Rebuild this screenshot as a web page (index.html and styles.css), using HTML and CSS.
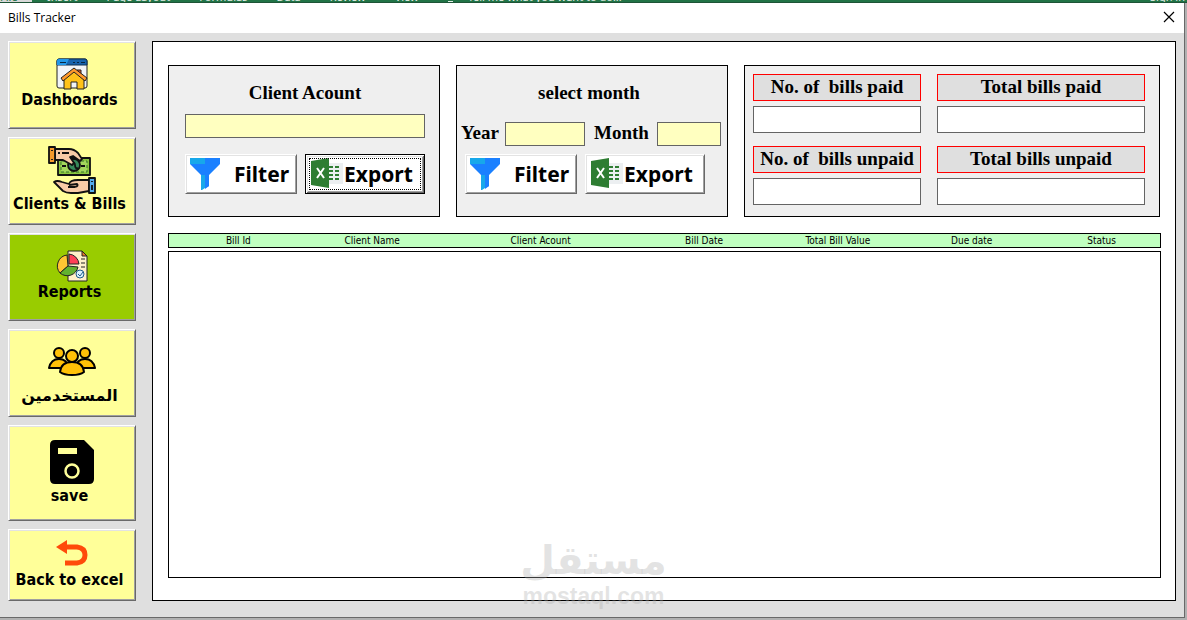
FILE: index.html
```
<!DOCTYPE html>
<html lang="en">
<head>
  <meta charset="UTF-8">
  <title>Bills Tracker</title>
  <link rel="stylesheet" href="styles.css">
</head>
<body>

  <!-- shared icons -->
  <svg class="defs" aria-hidden="true">
    <symbol id="funnel" viewBox="0 0 32 32">
      <path fill="#1a80ff" d="M15 0h15v6L19 17v11l-4 2z"/>
      <path fill="#17a8ea" d="M0 0h15v6H0z"/>
      <path fill="#1a80ff" d="M0 6h15v11h-4z"/>
      <path fill="#17a8ea" d="M11 17h4v13l-3 2h-1z"/>
      <path fill="#1a80ff" d="M15 17h4v11l-4 3z"/>
    </symbol>
    <symbol id="excel" viewBox="0 0 32 32">
      <path fill="#eceff1" d="M16 5h16v21H16z"/>
      <path fill="none" stroke="#2e7d32" stroke-width="2" stroke-dasharray="4 2" d="M18 9h10M18 13h10M18 17h10M18 21h10"/>
      <path fill="#2e7d32" d="M0 3l18-3v30L0 27z"/>
      <path fill="none" stroke="#fff" stroke-width="2" d="M6 10l7 10M13 10L6 20"/>
    </symbol>
  </svg>

  <div class="ribbon">
    <span class="tab file">File</span>
    <span class="tab">Insert</span>
    <span class="tab">Page Layout</span>
    <span class="tab">Formulas</span>
    <span class="tab">Data</span>
    <span class="tab">Review</span>
    <span class="tab">View</span>
    <span class="bulb"></span>
    <span class="tab">Tell me what you want to do...</span>
    <span class="tab signin">Sign in</span>
  </div>

  <div class="window">
    <header class="titlebar">
      <span>Bills Tracker</span>
      <button class="close" aria-label="Close">
        <svg width="12" height="12" viewBox="0 0 12 12"><path d="M1 1l10 10M11 1L1 11" stroke="#000" stroke-width="1.2"/></svg>
      </button>
    </header>

    <div class="content">
      <nav class="sidebar">
        <button class="nav-btn">
          <svg width="32" height="32" viewBox="0 0 32 32">
            <rect x="1" y="1" width="30" height="29" rx="2" fill="#f1f4f8" stroke="#222" />
            <path d="M1 7V3q0-2 2-2h26q2 0 2 2v4z" fill="#1763ad" stroke="#0c3155"/>
            <path d="M1 7V3q0-2 2-2h10l-3 6z" fill="#2196e8"/>
            <path d="M4 4.500h6M17 4.500h2m2 0h2m2 0h4" stroke="#07253f"/>
            <path d="M21 12h4v8h-4z" fill="#e85426" stroke="#222"/>
            <path d="M8 21l10-9 10 9v10h-7v-7h-6v7H8z" fill="#ffc21a" stroke="#222"/>
            <path d="M5 20l13-10 13 10-2 3-11-9-11 9z" fill="#ff982b" stroke="#222" stroke-linejoin="round"/>
          </svg>
          <span>Dashboards</span>
        </button>
        <button class="nav-btn">
          <svg width="48" height="48" viewBox="0 0 48 48" stroke="#111" stroke-width="1.800" stroke-linejoin="round">
            <path d="M10 12h32v17H10z" fill="#8bc63f"/>
            <path d="M13 15h26v11H13z" fill="#a3d65c" stroke="#36752d" stroke-dasharray="3 2" stroke-width="1"/>
            <circle cx="26" cy="19" r="6" fill="#36895a"/>
            <path d="M23 18q4-3 4 1t3 3M14 20h4m15 0h4" fill="none"/>
            <path d="M7 3h14q5 0 9 4l4 6-2 2-7-5-3 1 4 6-2 2-9-5H7z" fill="#f8cba7"/>
            <path d="M10 7h2m2 0h7" fill="none"/>
            <path d="M1 1h6v16H1z" fill="#f69a2c"/>
            <path d="M4 4v1m0 8v1" fill="none"/>
            <path d="M41 34H30q-8 0-9 4l-7-2q-5-2-8 0l9 9q3 2 8 2h7l11-2z" fill="#f8cba7"/>
            <path d="M20 41h7q4-1 2-3l-8 1" fill="none"/>
            <path d="M41 32h6v15h-6z" fill="#55abee"/>
            <path d="M44 35v1m0 3v5" fill="none"/>
          </svg>
          <span>Clients &amp; Bills</span>
        </button>
        <button class="nav-btn active">
          <svg width="32" height="32" viewBox="0 0 32 32" stroke="#222" stroke-linejoin="round">
            <path d="M12 1h14l5 5v25H12z" fill="#fff0c9"/>
            <path d="M26 1v5h5z" fill="#e8792b"/>
            <path d="M25 9h4m-4 4h4m-4 4h4"/>
            <path d="M11 5A11 11 0 0 0 4 23l8-7z" fill="#ffc533"/>
            <path d="M4 23a11 11 0 0 0 18-6l-10-1z" fill="#62b22f"/>
            <path d="M13 4a11 11 0 0 1 10 10H13z" fill="#ff4057"/>
            <circle cx="24" cy="24" r="4" fill="#d9f1ff" stroke="#1f5c88"/>
            <path d="M22 24l2 2 3-4" fill="none" stroke="#1f5c88"/>
          </svg>
          <span>Reports</span>
        </button>
        <button class="nav-btn">
          <svg width="48" height="48" viewBox="0 0 48 48" fill="#ffc107" stroke="#000" stroke-width="2" stroke-linejoin="round">
            <path d="M1 30q2-9 10-9t10 9z"/>
            <path d="M27 30q2-9 10-9t10 9z"/>
            <circle cx="11" cy="15" r="5"/>
            <circle cx="37" cy="15" r="5"/>
            <path d="M12 34q1-10 12-10t12 10q-4 3-12 3t-12-3z"/>
            <circle cx="24" cy="18" r="6"/>
          </svg>
          <span class="arabic" lang="ar">المستخدمين</span>
        </button>
        <button class="nav-btn tall">
          <svg width="48" height="48" viewBox="0 0 48 48">
            <path d="M7 2h29l10 10v29q0 5-5 5H7q-5 0-5-5V7q0-5 5-5z"/>
            <path d="M10 10h19v6H10z" fill="#ffff99"/>
            <circle cx="24" cy="33" r="6.500" fill="none" stroke="#ffff99" stroke-width="2.500"/>
          </svg>
          <span>save</span>
        </button>
        <button class="nav-btn short">
          <svg width="32" height="32" viewBox="0 0 32 32">
            <path d="M9 9h12q8 1 8 8 0 7-8 8H9" fill="none" stroke="#ff4a0a" stroke-width="5"/>
            <path d="M0 9l11-7v14z" fill="#ff4a0a"/>
          </svg>
          <span>Back to excel</span>
        </button>
      </nav>

      <main class="main">
        <div class="panels">
          <section class="panel">
            <label class="heading" for="client">Client Acount</label>
            <input class="field wide" id="client" type="text">
            <div class="actions">
              <button class="btn filter"><svg width="32" height="32"><use href="#funnel"/></svg>Filter</button>
              <button class="btn export focused"><svg width="32" height="32"><use href="#excel"/></svg>Export</button>
            </div>
          </section>

          <section class="panel month-panel">
            <h2 class="heading">select month</h2>
            <div class="period">
              <label for="year">Year</label>
              <input class="field year" id="year" type="text">
              <label class="month-label" for="month">Month</label>
              <input class="field month" id="month" type="text">
            </div>
            <div class="actions">
              <button class="btn filter"><svg width="32" height="32"><use href="#funnel"/></svg>Filter</button>
              <button class="btn export"><svg width="32" height="32"><use href="#excel"/></svg>Export</button>
            </div>
          </section>

          <section class="panel totals">
            <div class="total">
              <label for="paidCount">No. of  bills paid</label>
              <input class="field" id="paidCount" type="text">
            </div>
            <div class="total">
              <label for="paidTotal">Total bills paid</label>
              <input class="field" id="paidTotal" type="text">
            </div>
            <div class="total">
              <label for="unpaidCount">No. of  bills unpaid</label>
              <input class="field" id="unpaidCount" type="text">
            </div>
            <div class="total">
              <label for="unpaidTotal">Total bills unpaid</label>
              <input class="field" id="unpaidTotal" type="text">
            </div>
          </section>
        </div>

        <table class="columns">
          <thead>
            <tr>
              <th class="c-id">Bill Id</th>
              <th class="c-name">Client Name</th>
              <th class="c-account">Client Acount</th>
              <th class="c-date">Bill Date</th>
              <th class="c-value">Total Bill Value</th>
              <th class="c-due">Due date</th>
              <th class="c-status">Status</th>
            </tr>
          </thead>
        </table>
        <div class="list"></div>
      </main>
    </div>
  </div>

  <div class="watermark">
    <span class="mark" lang="ar">مستقل</span>
    <span class="site">mostaql.com</span>
  </div>

</body>
</html>
```
FILE: styles.css
```
* { box-sizing: border-box; }

body {
  margin: 0;
  min-height: 100vh;
  display: flex;
  flex-direction: column;
  position: relative;
  background: #b1b1b1;
  color: #000;
  font-family: "Noto Sans", "DejaVu Sans", sans-serif;
}
button, input { font-family: inherit; color: inherit; }
.defs { position: absolute; width: 0; height: 0; }

/* strip of the workbook above the form */
.ribbon {
  height: 3px;
  overflow: hidden;
  display: flex;
  align-items: flex-end;
  gap: 29px;
  padding-right: 2px;
  background: #217346;
  border-bottom: 1px solid #1d5436;
  color: #e4efe8;
  font-size: 11px;
  line-height: 10px;
}
.tab { white-space: nowrap; }
.file { width: 32px; margin-right: -14px; background: #d9d9d9; color: #217346; }
.bulb { width: 5px; height: 1px; margin-right: -14px; background: #e4efe8; }
.signin { margin-left: auto; }

.window {
  flex: 1;
  display: flex;
  flex-direction: column;
  margin: 0 2px 2px 0;
  background: #dfdfdf;
  border: solid #696969;
  border-width: 0 1px 1px 0;
}
.titlebar {
  height: 30px;
  display: flex;
  align-items: center;
  justify-content: space-between;
  padding: 0 8px 2px;
  background: #fff;
  font-family: "Open Sans", sans-serif;
  font-size: 12px;
}
.close {
  display: flex;
  padding: 1px;
  border: 0;
  background: none;
}
.content {
  flex: 1;
  display: flex;
  gap: 16px;
  padding: 8px 8px 16px;
}

/* raised buttons */
.nav-btn, .btn {
  display: flex;
  align-items: center;
  border: 1px solid;
  border-color: #fff #696969 #696969 #fff;
  box-shadow: inset 1px 1px #e3e3e3, inset -1px -1px #a0a0a0;
  font-weight: bold;
}

/* navigation */
.sidebar {
  width: 128px;
  display: flex;
  flex-direction: column;
  gap: 8px;
}
.nav-btn {
  height: 88px;
  flex-direction: column;
  justify-content: center;
  padding: 0 0 2px;
  background: #ffff99;
  font-family: "DejaVu Sans Condensed", "DejaVu Sans", sans-serif;
  font-size: 16px;
  line-height: 20px;
}
.nav-btn span { padding-right: 5px; white-space: nowrap; }
.nav-btn.active { background: #99cc00; }
.nav-btn.tall { height: 96px; }
.nav-btn.short { height: 72px; }
.nav-btn .arabic { font-family: "DejaVu Sans", sans-serif; }

.main {
  flex: 1;
  display: flex;
  flex-direction: column;
  padding: 23px 14px 22px 15px;
  background: #fff;
  border: 1px solid #000;
}
.panels {
  display: grid;
  grid-template-columns: 272fr 272fr 416fr;
  gap: 16px;
  margin-right: 1px;
}
.panel {
  height: 152px;
  padding: 15px 14px 0 16px;
  background: #efefef;
  border: 1px solid #000;
  font-family: "Liberation Serif", serif;
  font-size: 19px;
  font-weight: bold;
}
.heading {
  display: block;
  margin: 0 0 10px;
  font-size: 19px;
  line-height: 23px;
  text-align: center;
}
.field {
  display: block;
  height: 24px;
  padding: 0 4px;
  background: #ffffc0;
  border: 1px solid #646464;
  border-radius: 0;
}
.wide { width: 100%; }
.actions { display: flex; gap: 8px; margin-top: 16px; }
.btn {
  height: 40px;
  background: #fff;
  font-family: "Noto Sans", sans-serif;
  font-size: 21px;
}
.filter { width: 112px; padding: 0 4px; gap: 12px; }
.export { width: 120px; padding: 0 5px; gap: 1px; }
.export.focused {
  border-color: #000;
  box-shadow: inset 1px 1px #fff, inset -1px -1px #696969, inset 2px 2px #e3e3e3, inset -2px -2px #a0a0a0;
  outline: 1px dotted #000;
  outline-offset: -5px;
}

.month-panel { padding: 15px 6px 0 4px; }
.month-panel .heading { margin-bottom: 18px; padding-right: 4px; }
.month-panel .actions { margin: 8px 4px 0; }
.period { display: flex; gap: 6px; line-height: 22px; }
.month-label { margin-left: 3px; }
.year { width: 80px; }
.month { width: 64px; margin-left: auto; }

.totals {
  display: grid;
  grid-template-columns: 168fr 208fr;
  align-content: start;
  gap: 13px 16px;
  padding: 8px 14px 0 8px;
}
.total label {
  display: block;
  height: 27px;
  margin-bottom: 5px;
  background: #dfdfdf;
  border: 1px solid #f00;
  line-height: 23px;
  text-align: center;
  white-space: pre;
}
.total .field { width: 100%; height: 27px; background: #fff; }

/* bill list */
.columns {
  width: 100%;
  height: 15px;
  margin: 16px 0 3px;
  table-layout: fixed;
  border-collapse: separate;
  border-spacing: 0;
  background: #c0ffc0;
  border: 1px solid #000;
}
.columns th {
  padding: 0;
  font-family: "DejaVu Sans Condensed", "DejaVu Sans", sans-serif;
  font-size: 10px;
  font-weight: normal;
  line-height: 13px;
}
.c-id { width: 14%; }
.c-name { width: 13%; }
.c-account { width: 21%; }
.c-date { width: 12%; }
.c-value { width: 15%; }
.c-due { width: 12%; }
.columns .c-status { width: 13%; padding-left: 12px; }
.list { flex: 1; border: 1px solid #000; }

.watermark {
  position: absolute;
  left: 50%;
  bottom: 10px;
  transform: translateX(-50%);
  display: flex;
  flex-direction: column;
  align-items: center;
  color: rgba(175, 175, 175, 0.35);
  font-weight: bold;
  pointer-events: none;
}
.mark { font-family: "DejaVu Sans", sans-serif; font-size: 40px; line-height: 44px; }
.site { font-family: "Liberation Sans", sans-serif; font-size: 23px; line-height: 28px; }
```
